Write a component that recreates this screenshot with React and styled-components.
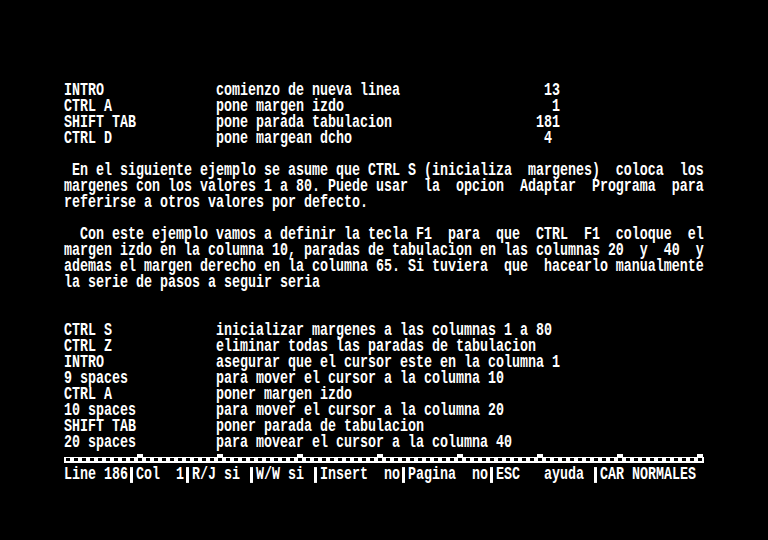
import React from 'react';
import styled, { createGlobalStyle } from 'styled-components';

const GlobalStyle = createGlobalStyle`
  html, body {
    margin: 0;
    height: 100%;
    background: #000;
  }
`;

const Screen = styled.div`
  width: 640px;
  margin: 82px 0 0 64px;
  color: #fff;
  font-family: "Liberation Mono", "DejaVu Sans Mono", monospace;
  font-weight: bold;
  font-size: 13.333px;
`;

const Row = styled.div`
  height: 16px;
  display: flex;
  align-items: center;
`;

const Text = styled.span`
  display: block;
  height: 12px;
  line-height: 12px;
  white-space: pre;
  transform: translateY(1px) scaleY(1.32);
`;

const RulerBox = styled.div`
  height: 16px;
  display: flex;
`;

const Sep = styled.span`
  display: inline-block;
  width: 8px;
  height: 12px;
  vertical-align: top;
  background: linear-gradient(to right, transparent 2px, #fff 2px, #fff 5px, transparent 5px);
`;

// place strings at fixed columns, like the 80 column screen
const at = (...parts) => {
  let s = '';
  for (let i = 0; i < parts.length; i += 2) {
    s = s.padEnd(parts[i]) + parts[i + 1];
  }
  return s;
};

const lines = [
  at(0, 'INTRO', 19, 'comienzo de nueva linea', 60, '13'),
  at(0, 'CTRL A', 19, 'pone margen izdo', 61, '1'),
  at(0, 'SHIFT TAB', 19, 'pone parada tabulacion', 59, '181'),
  at(0, 'CTRL D', 19, 'pone margean dcho', 60, '4'),
  '',
  ' En el siguiente ejemplo se asume que CTRL S (inicializa  margenes)  coloca  los',
  'margenes con los valores 1 a 80. Puede usar  la  opcion  Adaptar  Programa  para',
  'referirse a otros valores por defecto.',
  '',
  '  Con este ejemplo vamos a definir la tecla F1  para  que  CTRL  F1  coloque  el',
  'margen izdo en la columna 10, paradas de tabulacion en las columnas 20  y  40  y',
  'ademas el margen derecho en la columna 65. Si tuviera  que  hacearlo manualmente',
  'la serie de pasos a seguir seria',
  '',
  '',
  at(0, 'CTRL S', 19, 'inicializar margenes a las columnas 1 a 80'),
  at(0, 'CTRL Z', 19, 'eliminar todas las paradas de tabulacion'),
  at(0, 'INTRO', 19, 'asegurar que el cursor este en la columna 1'),
  at(0, '9 spaces', 19, 'para mover el cursor a la columna 10'),
  at(0, 'CTRL A', 19, 'poner margen izdo'),
  at(0, '10 spaces', 19, 'para mover el cursor a la columna 20'),
  at(0, 'SHIFT TAB', 19, 'poner parada de tabulacion'),
  at(0, '20 spaces', 19, 'para movear el cursor a la columna 40'),
];

const status = ['Line 186', 'Col  1', 'R/J si ', 'W/W si ', 'Insert  no', 'Pagina  no', 'ESC   ayuda ', 'CAR NORMALES'];

const Ruler = () => {
  const cols = Array.from({ length: 80 }, (_, i) => i);
  return (
    <RulerBox>
      <svg width="640" height="16" viewBox="0 0 640 16">
        <rect x="0" y="7" width="640" height="6" fill="#fff" />
        {cols.map((c) => (
          <rect key={c} x={c * 8 + 2} y="8" width="4" height="3" fill="#000" />
        ))}
        {cols.filter((c) => c % 10 === 9).map((c) => (
          <rect key={'t' + c} x={c * 8 + 1} y="4" width="6" height="3" fill="#fff" />
        ))}
      </svg>
    </RulerBox>
  );
};

const App = () => (
  <>
    <GlobalStyle />
    <Screen>
      {lines.map((l, i) => (
        <Row key={i}>
          <Text>{l}</Text>
        </Row>
      ))}
      <Ruler />
      <Row>
        <Text>
          {status.map((s, i) => (
            <React.Fragment key={i}>
              {i > 0 && <Sep />}
              {s}
            </React.Fragment>
          ))}
        </Text>
      </Row>
    </Screen>
  </>
);

export default App;
